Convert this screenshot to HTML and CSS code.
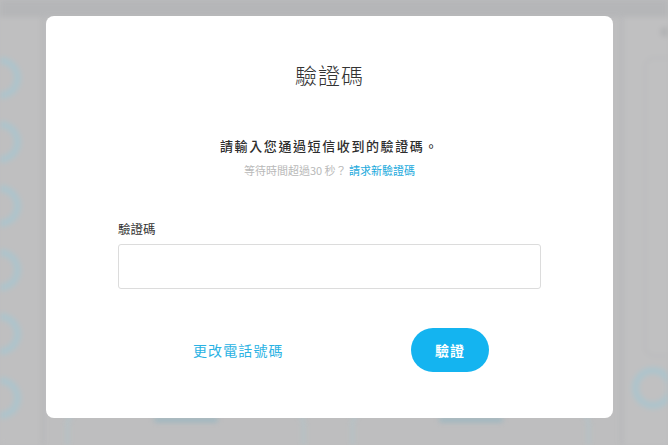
FILE: index.html
```html
<!DOCTYPE html>
<html lang="zh-Hant">
<head>
<meta charset="utf-8">
<title>驗證碼</title>
<link rel="stylesheet" href="styles.css">
</head>
<body>
<div class="backdrop">
  <div class="topbar"></div>
  <div class="workspace">
    <aside class="side-left">
      <span class="ring"></span><span class="ring"></span><span class="ring"></span>
      <span class="ring"></span><span class="ring"></span><span class="ring"></span>
    </aside>
    <main class="board">
      <div class="board-spacer"></div>
      <div class="cards">
        <div class="card"><span class="bar"></span></div>
        <div class="card"><span class="bar"></span></div>
      </div>
    </main>
    <aside class="side-right">
      <span class="dot"></span>
      <span class="panel"></span>
      <span class="ring ring-right"></span>
    </aside>
  </div>
</div>

<div class="overlay">
  <div class="modal">
    <h1 class="modal-title">驗證碼</h1>
    <p class="modal-desc">請輸入您通過短信收到的驗證碼。</p>
    <p class="modal-hint">等待時間超過30 秒？ <a class="hint-link" href="#">請求新驗證碼</a></p>
    <label class="field-label" for="code">驗證碼</label>
    <input class="field-input" id="code" type="text">
    <div class="modal-actions">
      <a class="change-link" href="#">更改電話號碼</a>
      <button class="verify-btn" type="button">驗證</button>
    </div>
  </div>
</div>
</body>
</html>
```

FILE: styles.css
```css
* { box-sizing: border-box; }

html, body {
  margin: 0;
  height: 100%;
}

body {
  background: #bebebf;
  font-family: "Noto Sans CJK TC", "Noto Sans", sans-serif;
  overflow: hidden;
}

/* blurred page behind the dialog */
.backdrop {
  height: 100%;
  display: flex;
  flex-direction: column;
  filter: blur(2.5px);
}

.topbar {
  height: 17px;
  background: #b5b6b8;
  flex: none;
}

.workspace {
  flex: 1;
  display: flex;
}

.side-left {
  width: 44px;
  background: #bfbfc0;
  border-right: 3px solid #b6b7b9;
  display: flex;
  flex-direction: column;
  gap: 22px;
  padding-top: 40px;
  overflow: hidden;
}

.ring {
  width: 42px;
  height: 42px;
  margin-left: -21px;
  border-radius: 50%;
  border: 7px solid #adc4cc;
  flex: none;
}

.board {
  flex: 1;
  display: flex;
  flex-direction: column;
}

.board-spacer { flex: 1; }

.cards {
  display: flex;
  gap: 46px;
  padding: 0 30px 0 22px;
  height: 40px;
}

.card {
  flex: 1;
  border: 3px solid #b3c3c8;
  border-bottom: none;
  border-radius: 20px 20px 0 0;
  display: flex;
  justify-content: center;
  padding-top: 10px;
}

.bar {
  width: 64px;
  height: 4px;
  background: #98b6c0;
  border-radius: 2px;
}

.side-right {
  width: 48px;
  background: #c0c0c1;
  border-left: 4px solid #b8b9bb;
  display: flex;
  flex-direction: column;
  align-items: flex-start;
  padding: 10px 0 0 8px;
  gap: 20px;
  overflow: hidden;
}

.dot {
  width: 10px;
  height: 10px;
  border-radius: 50%;
  background: #b2b3b5;
  margin-left: 28px;
}

.panel {
  width: 60px;
  height: 300px;
  border: 2px solid #b9babc;
  border-radius: 10px;
  margin-left: 12px;
}

.ring-right {
  margin-left: 0;
  margin-top: -10px;
}

/* dialog */
.overlay {
  position: fixed;
  inset: 0;
  padding: 16px 0 0 46px;
}

.modal {
  width: 567px;
  height: 402px;
  background: #fff;
  border-radius: 8px;
  padding: 42px 72px 0;
  display: flex;
  flex-direction: column;
}

.modal-title {
  margin: 0;
  text-align: center;
  font-size: 22px;
  font-weight: 300;
  line-height: 32px;
  color: #333;
  letter-spacing: 1px;
}

.modal-desc {
  margin: 47px 0 0;
  text-align: center;
  font-size: 13px;
  line-height: 18px;
  font-weight: 500;
  letter-spacing: 1.6px;
  color: #2d2d2d;
}

.modal-hint {
  margin: 7px 0 0;
  text-align: center;
  font-size: 11px;
  line-height: 16px;
  color: #b9b9b9;
}

.hint-link {
  color: #19a9dc;
  text-decoration: none;
}

.field-label {
  margin-top: 43px;
  font-size: 12.5px;
  line-height: 16px;
  color: #333;
}

.field-input {
  margin-top: 7px;
  height: 45px;
  width: 100%;
  border: 1px solid #dcdcdc;
  border-radius: 3px;
  outline: none;
  font: inherit;
}

.modal-actions {
  margin-top: 39px;
  display: flex;
  align-items: center;
  justify-content: space-between;
  padding: 0 52px 0 75px;
}

.change-link {
  font-size: 14px;
  letter-spacing: 1.1px;
  color: #2ab2e3;
  text-decoration: none;
}

.verify-btn {
  width: 78px;
  height: 44px;
  border: none;
  border-radius: 22px;
  background: #14b4f0;
  color: #fff;
  font-family: inherit;
  font-size: 14px;
  font-weight: 700;
  letter-spacing: 1px;
  cursor: pointer;
}
```
